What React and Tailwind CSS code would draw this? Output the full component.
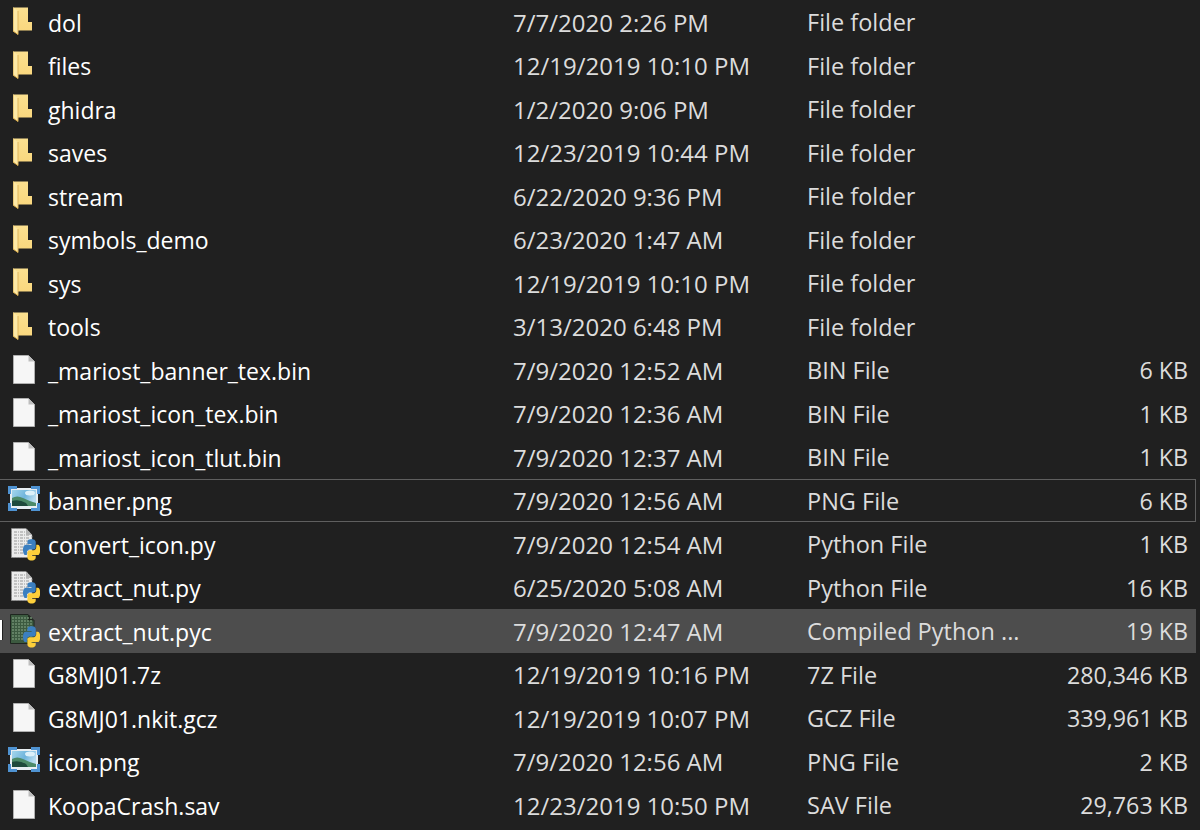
const rows = [
  { name: 'dol', date: '7/7/2020 2:26 PM', type: 'File folder', size: '', icon: 'folder' },
  { name: 'files', date: '12/19/2019 10:10 PM', type: 'File folder', size: '', icon: 'folder' },
  { name: 'ghidra', date: '1/2/2020 9:06 PM', type: 'File folder', size: '', icon: 'folder' },
  { name: 'saves', date: '12/23/2019 10:44 PM', type: 'File folder', size: '', icon: 'folder' },
  { name: 'stream', date: '6/22/2020 9:36 PM', type: 'File folder', size: '', icon: 'folder' },
  { name: 'symbols_demo', date: '6/23/2020 1:47 AM', type: 'File folder', size: '', icon: 'folder' },
  { name: 'sys', date: '12/19/2019 10:10 PM', type: 'File folder', size: '', icon: 'folder' },
  { name: 'tools', date: '3/13/2020 6:48 PM', type: 'File folder', size: '', icon: 'folder' },
  { name: '_mariost_banner_tex.bin', date: '7/9/2020 12:52 AM', type: 'BIN File', size: '6 KB', icon: 'file' },
  { name: '_mariost_icon_tex.bin', date: '7/9/2020 12:36 AM', type: 'BIN File', size: '1 KB', icon: 'file' },
  { name: '_mariost_icon_tlut.bin', date: '7/9/2020 12:37 AM', type: 'BIN File', size: '1 KB', icon: 'file' },
  { name: 'banner.png', date: '7/9/2020 12:56 AM', type: 'PNG File', size: '6 KB', icon: 'image', state: 'focus' },
  { name: 'convert_icon.py', date: '7/9/2020 12:54 AM', type: 'Python File', size: '1 KB', icon: 'py' },
  { name: 'extract_nut.py', date: '6/25/2020 5:08 AM', type: 'Python File', size: '16 KB', icon: 'py' },
  { name: 'extract_nut.pyc', date: '7/9/2020 12:47 AM', type: 'Compiled Python ...', size: '19 KB', icon: 'pyc', state: 'hover' },
  { name: 'G8MJ01.7z', date: '12/19/2019 10:16 PM', type: '7Z File', size: '280,346 KB', icon: 'file' },
  { name: 'G8MJ01.nkit.gcz', date: '12/19/2019 10:07 PM', type: 'GCZ File', size: '339,961 KB', icon: 'file' },
  { name: 'icon.png', date: '7/9/2020 12:56 AM', type: 'PNG File', size: '2 KB', icon: 'image' },
  { name: 'KoopaCrash.sav', date: '12/23/2019 10:50 PM', type: 'SAV File', size: '29,763 KB', icon: 'file' },
]

function FolderIcon() {
  return (
    <svg width="20" height="28" viewBox="0 0 20 28">
      <defs>
        <linearGradient id="folderBack" x1="0" y1="0" x2="0" y2="1">
          <stop offset="0" stopColor="#fbe08f" />
          <stop offset="1" stopColor="#f9d67c" />
        </linearGradient>
      </defs>
      <path d="M0 0.5 L15 0.5 L15 15 L19 15 L19 23.5 L5 23.5 L5 27.5 L0 24 Z" fill="url(#folderBack)" />
      <path d="M0 0.5 L5 4 L5 27.5 L0 24 Z" fill="#fde9a6" />
      <path d="M5 4 L5 27.5" stroke="#e0b65c" strokeWidth="1" />
      <path d="M0 0.5 L0 24 L5 27.5" fill="none" stroke="#d8a948" strokeWidth="1" />
    </svg>
  )
}

function FileIcon() {
  return (
    <svg width="22" height="29" viewBox="0 0 22 29">
      <path d="M0.5 0.5 L15.5 0.5 L21.5 6.5 L21.5 28.5 L0.5 28.5 Z" fill="#f6f6f6" stroke="#b0b0b0" strokeWidth="1" />
      <path d="M15.5 0.5 L15.5 6.5 L21.5 6.5 Z" fill="#bdbdbd" />
    </svg>
  )
}

function ImageIcon() {
  return (
    <svg width="32" height="25" viewBox="0 0 32 25">
      <defs>
        <linearGradient id="imgSky" x1="0" y1="0" x2="1" y2="0.4">
          <stop offset="0" stopColor="#a4d6ec" />
          <stop offset="0.6" stopColor="#6fb4dc" />
          <stop offset="1" stopColor="#b8dcef" />
        </linearGradient>
      </defs>
      <rect x="2" y="2" width="28" height="21" fill="#e8eef2" />
      <rect x="4" y="4" width="24" height="16" fill="url(#imgSky)" />
      <ellipse cx="22" cy="7" rx="5" ry="2.5" fill="#dcf0f9" />
      <path d="M4 12 Q9 9 15 12 T28 17 L28 20 L4 20 Z" fill="#4c8a68" />
      <path d="M4 15 Q11 13 18 17 L20 20 L4 20 Z" fill="#1f4a3c" />
      <path d="M0 8 L0 0 L9 0 L9 3 L3 3 L3 8 Z" fill="#4f93d2" />
      <path d="M32 8 L32 0 L23 0 L23 3 L29 3 L29 8 Z" fill="#4f93d2" />
      <path d="M0 17 L0 25 L9 25 L9 22 L3 22 L3 17 Z" fill="#4f93d2" />
      <path d="M32 17 L32 25 L23 25 L23 22 L29 22 L29 17 Z" fill="#4f93d2" />
    </svg>
  )
}

function PythonLogo({ x, y }) {
  return (
    <g transform={`translate(${x} ${y}) scale(0.155 0.19)`}>
      <path d="M54.9 0.9 C50.3 0.9 46 1.3 42.1 2 C30.7 4 28.6 8.2 28.6 16 L28.6 26.2 H55.4 V29.7 H18.5 C10.7 29.7 3.9 34.4 1.8 43.3 C-0.7 53.5 -0.8 59.9 1.8 70.5 C3.7 78.4 8.2 84.1 16 84.1 H25.2 V71.8 C25.2 63 32.9 55.2 42 55.2 H68.8 C76.3 55.2 82.2 49.1 82.2 41.6 V16 C82.2 8.7 76.1 3.3 68.8 2 C64.2 1.3 59.4 0.9 54.9 0.9 Z" fill="#3b7fc0" />
      <path d="M85.6 29.7 V41.6 C85.6 50.8 77.7 58.6 68.8 58.6 H42 C34.7 58.6 28.6 64.9 28.6 72.2 V97.8 C28.6 105.1 34.9 109.4 42 111.5 C50.5 114 58.7 114.4 68.8 111.5 C75.5 109.6 82.2 105.7 82.2 97.8 V87.6 H55.4 V84.1 H95.6 C103.4 84.1 106.3 78.7 109 70.5 C111.8 62 111.7 53.9 109 43.3 C107.1 35.6 103.4 29.7 95.6 29.7 Z" fill="#fdcf3a" />
    </g>
  )
}

function PyIcon() {
  return (
    <svg width="29" height="33" viewBox="0 0 29 33">
      <path d="M0.5 0.5 L15 0.5 L21 7 L21 29.5 L0.5 29.5 Z" fill="#ececec" stroke="#8f8f8f" strokeWidth="1" strokeDasharray="2 1" />
      <path d="M15 0.5 L15 7 L21 7 Z" fill="#b5b5b5" />
      {[4, 7, 10, 13, 16, 19, 22, 25].map(y => (
        <path key={y} d={`M3 ${y} L18 ${y}`} stroke="#b4b4b4" strokeWidth="1.5" strokeDasharray="3 1 1 1" />
      ))}
      <PythonLogo x={12} y={11} />
    </svg>
  )
}

function PycIcon() {
  return (
    <svg width="30" height="34" viewBox="0 0 30 34">
      <path d="M0.5 0.5 L18 0.5 L24 6.5 L24 29.5 L0.5 29.5 Z" fill="#3c5a40" stroke="#1f2620" strokeWidth="1" />
      <path d="M18 0.5 L18 6.5 L24 6.5 Z" fill="#20281f" />
      {[4, 7, 10, 13, 16, 19, 22, 25].map(y => (
        <path key={y} d={`M2 ${y} L22 ${y}`} stroke="#6f8f70" strokeWidth="1.5" strokeDasharray="2 1" />
      ))}
      <PythonLogo x={13} y={12} />
    </svg>
  )
}

function RowIcon({ icon }) {
  if (icon === 'folder') return <div className="w-[48px] pl-[13px] mb-[3px] flex"><FolderIcon /></div>
  if (icon === 'file') return <div className="w-[48px] pl-[13px] mb-[3px] flex"><FileIcon /></div>
  if (icon === 'image') return <div className="w-[48px] pl-[8px] mb-[6px] flex"><ImageIcon /></div>
  if (icon === 'py') return <div className="w-[48px] pl-[11px] mb-[1px] flex"><PyIcon /></div>
  return <div className="w-[48px] pl-[10px] mb-[1px] flex"><PycIcon /></div>
}

function Row({ row }) {
  const bg = row.state === 'hover' ? 'bg-[#4d4d4d]' : row.state === 'focus' ? 'border-y border-r border-[#5f5f5f]' : ''
  return (
    <div className={`w-[1196px] h-[43.5px] pt-[2px] flex items-center relative ${bg}`}>
      {row.state === 'hover' && <span className="absolute left-0 top-[11px] w-[3px] h-[20px] bg-white border-r border-[#202020]" />}
      <RowIcon icon={row.icon} />
      <span className="w-[465px] text-[23px] text-white whitespace-nowrap">{row.name}</span>
      <span className="w-[294px] text-[#dcdcdc] whitespace-nowrap">{row.date}</span>
      <span className="w-[230px] text-[23.5px] text-[#dcdcdc] whitespace-nowrap">{row.type}</span>
      <span className="w-[151px] text-[23.25px] text-right text-[#dcdcdc] whitespace-nowrap">{row.size}</span>
    </div>
  )
}

export default function App() {
  return (
    <div className="w-[1200px] h-[830px] overflow-hidden bg-[#202020] text-[24px] font-['Open_Sans','Noto_Sans',sans-serif]">
      {rows.map(row => <Row key={row.name} row={row} />)}
    </div>
  )
}
